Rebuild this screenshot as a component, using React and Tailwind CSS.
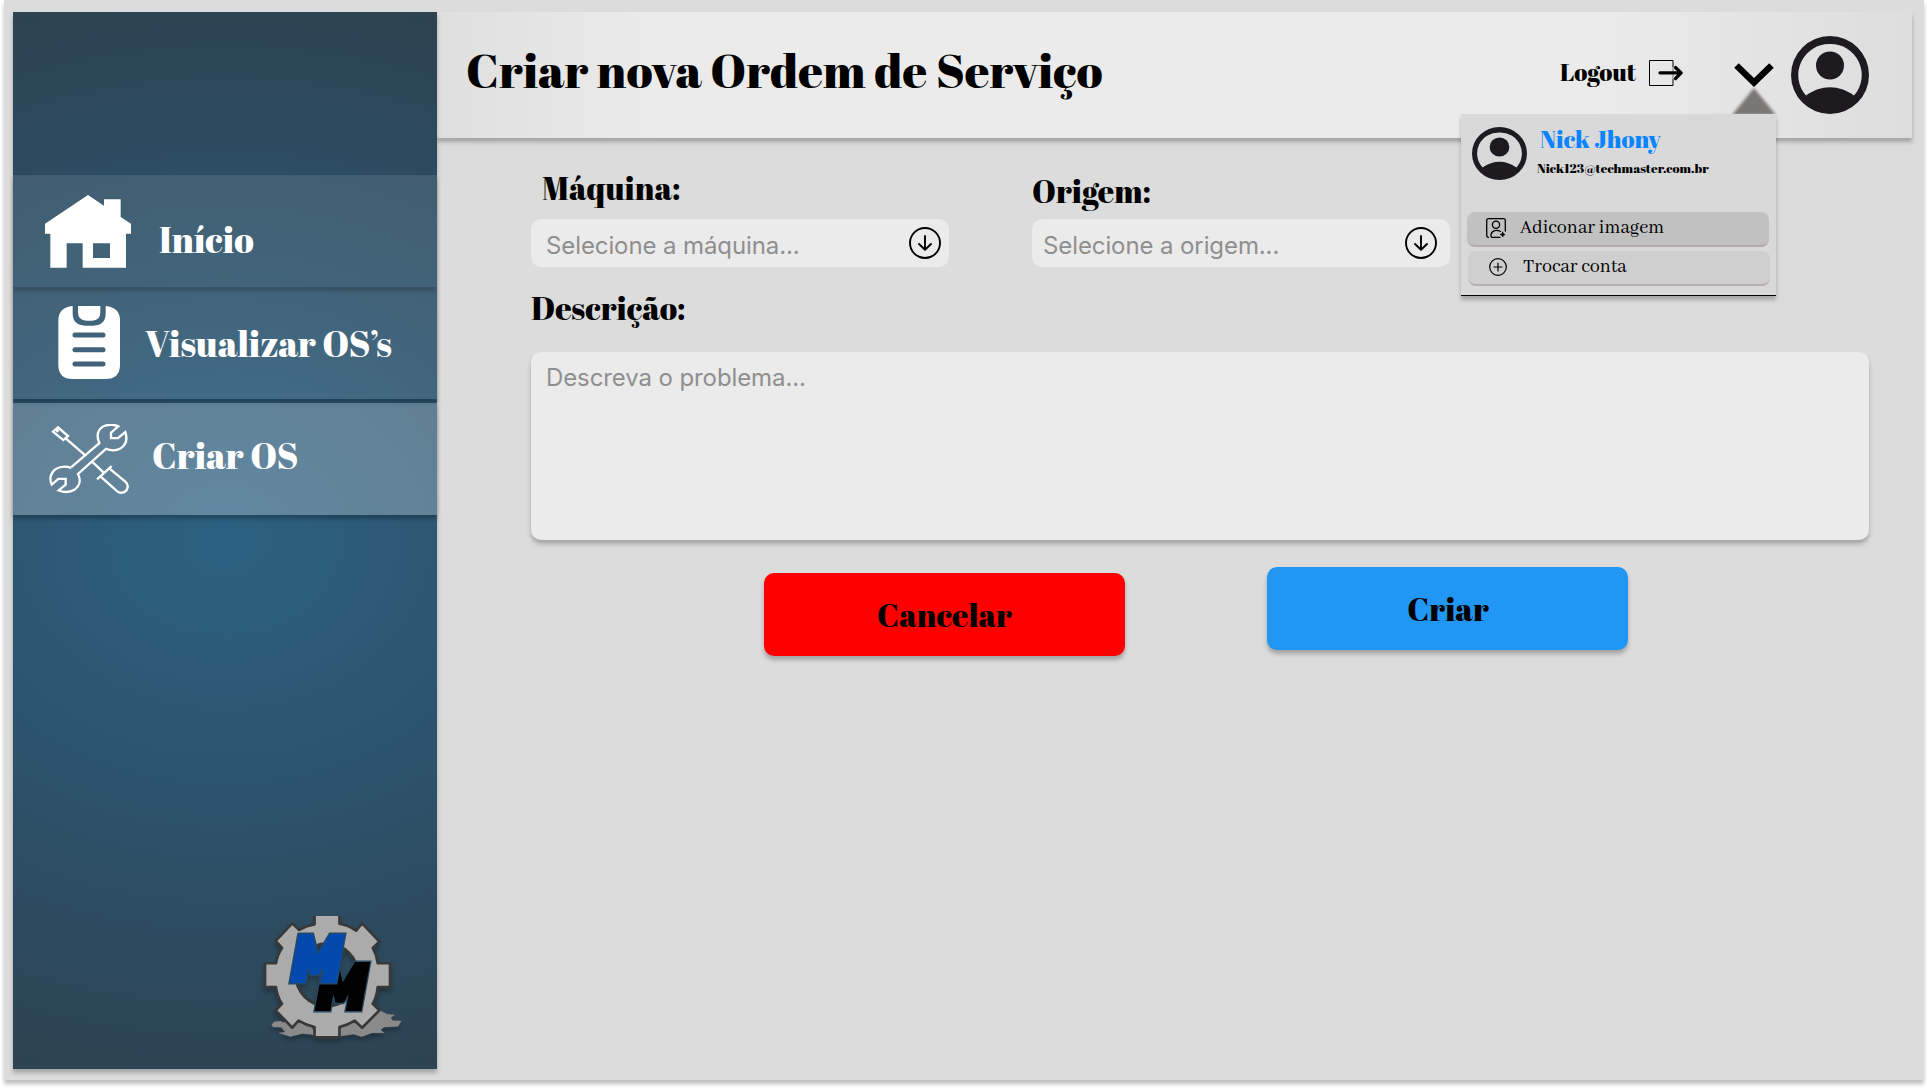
import React from "react";

const display = "font-['Abril_Fatface','Liberation_Serif',serif] font-normal";
const bodySerif = "font-['Abhaya_Libre','Liberation_Serif',serif]";

function HouseIcon({ className }) {
  return (
    <svg className={className} viewBox="135 585 258 218" preserveAspectRatio="none" fill="#fff">
      <path
        fillRule="evenodd"
        d="M264 585 L312 617 V598 H362 V651 L393 671 V701 H378 V802 H248 V729 H200 V802 H151 V701 H135 V671 Z M279 729 V773 H330 V729 Z"
      />
    </svg>
  );
}

function ClipboardIcon({ className }) {
  return (
    <svg className={className} viewBox="174 78 186 219" preserveAspectRatio="none">
      <path
        fill="#fff"
        d="M218 78 V100 Q218 136 256 137 H280 Q317 136 317 100 V78 Q360 82 360 122 V254 Q360 297 316 297 H218 Q175 297 175 254 V122 Q175 82 218 78 Z"
      />
      <path fill="#fff" d="M234 78 H301 V96 Q301 122 276 122 H259 Q234 122 234 96 Z" />
      <path d="M225 165 H309 M225 209 H309 M225 252 H309" stroke="#40627a" strokeWidth="15" strokeLinecap="round" />
    </svg>
  );
}

function ToolsIcon({ className }) {
  return (
    <svg className={className} viewBox="147 431 240 209" preserveAspectRatio="none" fill="none" stroke="#fff" strokeWidth="7">
      <path d="M159 454 L174 441 L204 467 L190 479 Z M169 454 L176 449 M197 474 L255 524" />
      <path d="M214 560 L298 488 C288 466 293 446 312 437 C327 432 343 432 355 438 L333 457 V473 H354 L376 455 C383 476 377 494 361 504 C348 511 332 511 318 505 L234 580 C244 600 238 617 224 627 C208 636 190 635 176 629 L197 612 V595 H175 L155 612 C147 594 152 575 168 565 C183 556 200 557 214 562" />
      <path d="M277 544 L311 576 M291 596 L335 557 M302 588 L352 632 C362 640 374 636 380 628 C385 619 384 610 376 603 L325 561" />
    </svg>
  );
}

function AvatarIcon({ className }) {
  return (
    <svg className={className} viewBox="0 0 78 78" preserveAspectRatio="none">
      <path
        fill="#1d1b20"
        fillRule="evenodd"
        d="M39 0 A39 39 0 1 1 39 78 A39 39 0 1 1 39 0 Z M39 8 A31 31 0 0 0 15 59.500 C30 48.500 48 48.500 63 59.500 A31 31 0 0 0 39 8 Z"
      />
      <circle cx="39" cy="29.500" r="14" fill="#1d1b20" />
    </svg>
  );
}

function LogoutIcon({ className }) {
  return (
    <svg className={className} viewBox="0 0 35 26" fill="none" stroke="#000">
      <path d="M24 7 V.5 H.5 V25.500 H24 V19" strokeWidth="1" />
      <path d="M24 7 V19" strokeWidth=".5" />
      <path d="M11 12.800 H32 M26.500 7.500 L32.200 12.800 L26.500 18.500" strokeWidth="3.200" strokeLinecap="round" strokeLinejoin="round" />
    </svg>
  );
}

function ArrowDownCircle({ className }) {
  return (
    <svg className={className} viewBox="0 0 32 32" fill="none" stroke="#000" strokeWidth="1.900" strokeLinecap="round" strokeLinejoin="round">
      <circle cx="16" cy="16" r="15" />
      <path d="M16 9 V22.500 M10 17 L16 22.700 L22 17" />
    </svg>
  );
}

function ImageUserIcon({ className }) {
  return (
    <svg className={className} viewBox="0 0 20 20" fill="none" stroke="#000" strokeWidth="1.300" strokeLinecap="round">
      <path d="M2.500 19.300 Q.7 19.300 .7 17 V2.500 Q.7 .7 2.500 .7 H17.500 Q19.300 .7 19.300 2.500 V13" />
      <circle cx="10" cy="6.800" r="3.600" />
      <path d="M14.500 13.500 C11 11.500 6 12 5 16.500 Q4.500 19.300 6.500 19.300 H14" />
      <path d="M16.700 14.300 Q17 16.300 19 16.600 Q17 16.900 16.700 18.900 Q16.400 16.900 14.400 16.600 Q16.400 16.300 16.700 14.300 Z" fill="#000" strokeWidth=".8" />
    </svg>
  );
}

function PlusCircleIcon({ className }) {
  return (
    <svg className={className} viewBox="0 0 18 18" fill="none" stroke="#000" strokeWidth="1.200" strokeLinecap="round">
      <circle cx="9" cy="9" r="8.300" />
      <path d="M9 5 V13 M5 9 H13" />
    </svg>
  );
}

function Logo({ className }) {
  return (
    <svg className={className} viewBox="90 78 440 382" overflow="visible">
      <clipPath id="gear-top">
        <rect x="90" y="78" width="440" height="382" />
      </clipPath>
      <path
        fill="#8a8a8a"
        stroke="#777"
        d="M124 404 L132 396 L150 394 L158 398 L190 392 L240 405 L260 440 L240 434 L215 432 L180 441 L146 430 L165 427 L152 413 L128 412 Z M330 440 L300 430 L400 380 L450 362 L470 373 L494 376 L482 384 L488 392 L514 394 L504 410 L462 413 L452 421 L463 430 L425 430 L395 441 L370 434 Z"
      />
      <path
        clipPath="url(#gear-top)"
        fill="#ababab"
        fillRule="evenodd"
        stroke="#383838"
        strokeWidth="8"
        strokeLinejoin="round"
        d="M253 70 H328 V101 Q354 105 378 122 L396 100 L448 155 L428 174 Q440 195 443 220 H480 V292 H443 Q440 322 428 342 L448 362 L396 414 L374 393 Q352 407 328 412 V443 H253 V412 Q228 407 205 393 L186 414 L136 362 L155 342 Q141 322 137 292 H104 V220 H137 Q141 195 155 174 L136 153 L186 100 L207 120 Q230 106 253 103 Z M290 161 A94 94 0 1 0 290 349 A94 94 0 1 0 290 161 Z"
      />
      <g fontFamily="Kanit, Inter, sans-serif" fontWeight="900" fontStyle="italic" fontSize="232" stroke="#274a63" strokeWidth="9" paintOrder="stroke">
        <text transform="translate(257 364) scale(.84 1)" fill="#000">M</text>
        <text transform="translate(182 281) scale(.84 1)" fill="#0449ad">M</text>
      </g>
    </svg>
  );
}

function Sidebar() {
  return (
    <aside className="z-10 flex h-[1057px] w-[424px] shrink-0 flex-col bg-[radial-gradient(690px_569px_at_50%_50%,#2c6183_0%,#2d4454_93%,#2e434f_100%)] pt-[163px] text-white shadow-[0_4px_4px_rgba(0,0,0,0.25)]">
      <nav className="flex flex-col">
        <a className="flex h-[112px] items-start bg-white/10 shadow-[0_4px_4px_rgba(0,0,0,0.25)]">
          <HouseIcon className="mt-5 ml-8 h-[73px] w-[86px]" />
          <span className={`${display} mt-11 ml-7 text-[36px] leading-10`}>Início</span>
        </a>
        <a className="flex h-[112px] items-start bg-white/10 shadow-[0_4px_4px_rgba(0,0,0,0.25)]">
          <ClipboardIcon className="mt-[19px] ml-[45px] h-[73px] w-[62px]" />
          <span className={`${display} mt-9 ml-[25px] text-[36px] leading-10 whitespace-nowrap`}>Visualizar OS’s</span>
        </a>
        <a className="mt-1 flex h-[112px] items-start bg-white/25 shadow-[0_4px_4px_rgba(0,0,0,0.25)]">
          <ToolsIcon className="mt-[21px] ml-9 h-[70px] w-20" />
          <span className={`${display} mt-8 ml-[23px] text-[36px] leading-10`}>Criar OS</span>
        </a>
      </nav>
      <Logo className="mt-auto mb-[26px] ml-[247px] h-[127px] w-[147px] drop-shadow-[0_4px_2px_rgba(0,0,0,0.25)]" />
    </aside>
  );
}

function AccountMenu() {
  return (
    <div className="absolute top-[102px] left-[1024px] z-20 flex h-[182px] w-[315px] flex-col border-b border-black bg-[#d9d9d9] shadow-[0_4px_4px_rgba(0,0,0,0.25)]">
      <div className="flex h-[98px] items-start">
        <AvatarIcon className="mt-[13px] ml-[11px] h-[53px] w-[55px]" />
        <div className="ml-[10px] flex flex-col">
          <span className={`${display} mt-[9px] ml-[3px] text-[24px] leading-8 text-[#0a84ff]`}>Nick Jhony</span>
          <span className={`${display} mt-[3px] text-[13px] leading-5 text-black`}>Nick123@techmaster.com.br</span>
        </div>
      </div>
      <button className="ml-[6px] flex h-[35px] w-[302px] items-start rounded-lg border-b-2 border-[#b3abab] bg-[#c1c1c1]">
        <ImageUserIcon className="mt-[6px] ml-[19px] size-5" />
        <span className={`${bodySerif} mt-1 ml-[14px] text-[20px] leading-6`}>Adiconar imagem</span>
      </button>
      <button className="mt-1 ml-[7px] flex h-[35px] w-[302px] items-start rounded-lg border-b-2 border-[#b8b0b0] bg-[#cfcfcf]">
        <PlusCircleIcon className="mt-[7px] ml-[21px] size-[18px]" />
        <span className={`${bodySerif} mt-1 ml-[16px] text-[20px] leading-6`}>Trocar conta</span>
      </button>
    </div>
  );
}

function Header() {
  return (
    <header className="relative flex h-[126px] w-[1475px] items-start bg-[linear-gradient(90deg,#dfdfdf_0%,#ebebeb_15%,#ebebeb_78%,#dddddd_100%)] shadow-[0_4px_4px_rgba(0,0,0,0.25)]">
      <h1 className={`${display} mt-7 ml-[29px] w-[660px] text-[48px] leading-[60px] whitespace-nowrap text-black`}>
        Criar nova Ordem de Serviço
      </h1>
      <button className="mt-[44px] ml-[434px] flex w-[124px] items-start justify-between">
        <span className={`${display} text-[24px] leading-8 text-black`}>Logout</span>
        <LogoutIcon className="mt-1 h-[26px] w-[35px]" />
      </button>
      <div className="mt-[51px] ml-[48px] flex w-[44px] flex-col items-center">
        <svg className="h-6 w-10" viewBox="0 0 40 24" fill="none" stroke="#000" strokeWidth="6.500">
          <path d="M2.500 2.500 L20 19.500 L37.500 2.500" />
        </svg>
        <svg className="mt-px h-[27px] w-11 blur-[1.500px]" viewBox="0 0 44 27">
          <path d="M22 0 L44 27 H0 Z" fill="#7a7675" />
        </svg>
      </div>
      <AvatarIcon className="mt-6 ml-[15px] size-[78px]" />
      <AccountMenu />
    </header>
  );
}

const placeholder = "font-['Inter',sans-serif] text-[24px] leading-8 tracking-[-0.1px] text-[#8f8f8f]";
const label = `${display} text-[32px] leading-10 whitespace-nowrap text-black`;

function Form() {
  return (
    <main className="flex w-[1432px] flex-col pl-[94px]">
      <div className="flex gap-[83px]">
        <div className="flex w-[418px] flex-col pt-[30px]">
          <label className={`${label} ml-[11px]`}>Máquina:</label>
          <div className="mt-[11px] flex h-12 items-center justify-between rounded-[10px] bg-[#ebebeb] pr-2 pl-[15px]">
            <span className={`${placeholder} pt-[5px]`}>Selecione a máquina...</span>
            <ArrowDownCircle className="size-8" />
          </div>
        </div>
        <div className="flex w-[418px] flex-col pt-[33px]">
          <label className={label}>Origem:</label>
          <div className="mt-2 flex h-12 items-center justify-between rounded-[10px] bg-[#ebebeb] pr-[13px] pl-[11px]">
            <span className={`${placeholder} pt-[5px]`}>Selecione a origem...</span>
            <ArrowDownCircle className="size-8" />
          </div>
        </div>
      </div>
      <label className={`${label} mt-[21px]`}>Descrição:</label>
      <div className="mt-6 h-[188px] rounded-[10px] bg-[#ebebeb] pt-[10px] pl-[15px] shadow-[0_4px_4px_rgba(0,0,0,0.25)]">
        <span className={placeholder}>Descreva o problema...</span>
      </div>
      <div className="mt-[27px] flex items-start gap-[142px] pl-[233px]">
        <button className={`${display} mt-[6px] h-[83px] w-[361px] rounded-[10px] bg-[#ff0000] pt-px text-[32px] text-black shadow-[0_4px_4px_rgba(0,0,0,0.25)]`}>
          Cancelar
        </button>
        <button className={`${display} h-[83px] w-[361px] rounded-[10px] bg-[#2196f3] pt-px pl-px text-[32px] text-black shadow-[0_4px_4px_rgba(0,0,0,0.25)]`}>
          Criar
        </button>
      </div>
    </main>
  );
}

export default function App() {
  return (
    <div className="h-[1088px] w-[1928px] overflow-hidden bg-white">
      <div className="mx-1 flex h-[1080px] bg-[#dcdcdc] pt-3 pl-[9px] shadow-[0_4px_4px_rgba(0,0,0,0.25)]">
        <Sidebar />
        <div className="flex flex-col">
          <Header />
          <Form />
        </div>
      </div>
    </div>
  );
}
